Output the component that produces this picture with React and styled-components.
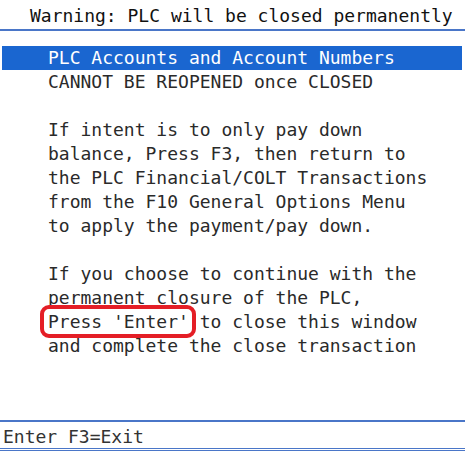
import React from 'react'
import styled, { createGlobalStyle } from 'styled-components'

const Global = createGlobalStyle`
  html, body {
    margin: 0;
    padding: 0;
    background: #fff;
  }
`

const Screen = styled.div`
  display: flex;
  flex-direction: column;
  width: 465px;
  height: 451px;
  font-family: "DejaVu Sans Mono", "Liberation Mono", monospace;
  font-size: 18px;
  color: #222;
  background: #fff;
  overflow: hidden;
`

const Title = styled.div`
  height: 29px;
  line-height: 32px;
  padding-left: 30px;
  white-space: pre;
  border-bottom: 2px solid #4a76c8;
  color: #111;
`

const Body = styled.div`
  display: flex;
  flex-direction: column;
  padding: 15px 3px 0 2px;
  flex: 1;
`

const Line = styled.div`
  height: 24px;
  line-height: 24px;
  padding-left: 46px;
  white-space: pre;
  background: ${p => (p.selected ? '#1a66d0' : 'transparent')};
  color: ${p => (p.selected ? '#fff' : '#2a2a2a')};
`

const Marked = styled.span`
  position: relative;
  display: inline-block;
  height: 24px;

  &::after {
    content: '';
    position: absolute;
    left: -8px;
    right: -7px;
    top: -5px;
    bottom: -4px;
    border: 4px solid #e41e26;
    border-radius: 9px;
  }
`

const Footer = styled.div`
  height: 26px;
  line-height: 29px;
  padding-left: 3px;
  white-space: pre;
  color: #333;
  border-top: 2px solid #4a76c8;
  border-bottom: 3px double #4a76c8;
`

const lines = [
  'CANNOT BE REOPENED once CLOSED',
  '',
  'If intent is to only pay down',
  'balance, Press F3, then return to',
  'the PLC Financial/COLT Transactions',
  'from the F10 General Options Menu',
  'to apply the payment/pay down.',
  '',
  'If you choose to continue with the',
  'permanent closure of the PLC,',
]

export default function App() {
  return (
    <Screen>
      <Global />
      <Title>Warning: PLC will be closed permanently</Title>
      <Body>
        <Line selected>PLC Accounts and Account Numbers</Line>
        {lines.map((t, i) => (
          <Line key={i}>{t}</Line>
        ))}
        <Line>
          <Marked>Press 'Enter'</Marked> to close this window
        </Line>
        <Line>and complete the close transaction</Line>
      </Body>
      <Footer>Enter F3=Exit</Footer>
    </Screen>
  )
}
